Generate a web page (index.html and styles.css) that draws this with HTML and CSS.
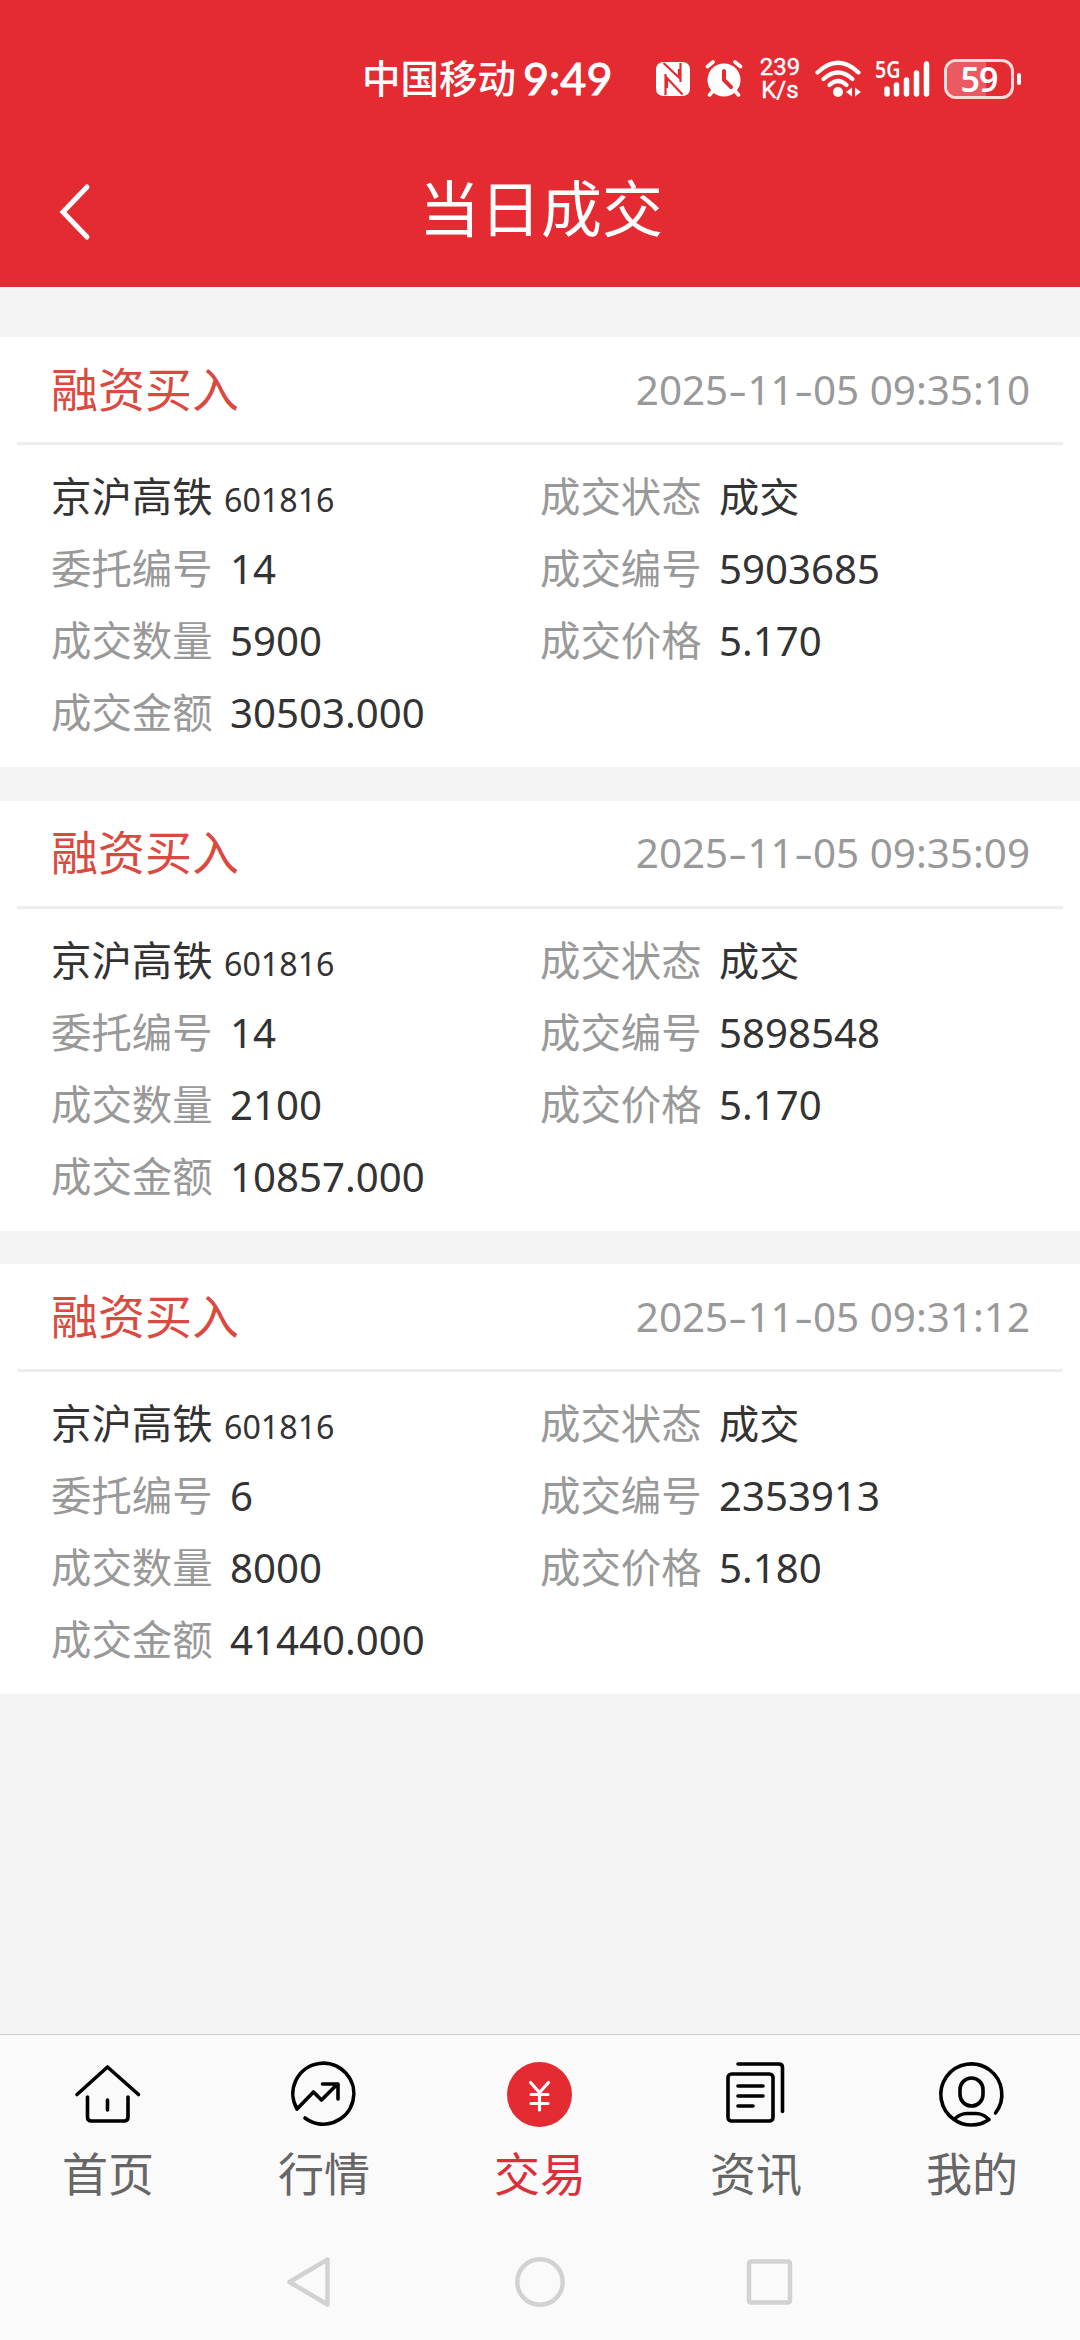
FILE: index.html
```html
<!DOCTYPE html>
<html lang="zh-CN">
<head>
<meta charset="utf-8">
<title>当日成交</title>
<link rel="stylesheet" href="styles.css">
</head>
<body>
<header class="header">
  <div class="status">
    <span class="carrier">中国移动</span>
    <span class="clock">9:49</span>
    <svg class="nfc" width="34" height="34" viewBox="0 0 34 34"><path d="M8 0H26Q34 0 34 8V26Q34 34 26 34H8Q0 34 0 26V8Q0 0 8 0Z" fill="#fff"/><path d="M7.500 1L23 15.500V7M24.500 1V20M11 26V16L26.500 32.500M9.500 12V33" fill="none" stroke="#e32b31" stroke-width="2.200"/></svg>
    <svg class="alarm" width="38" height="37" viewBox="0 0 38 37"><circle cx="19" cy="20" r="16.500" fill="#fff"/><path d="M2.500 6.500L8 2M35.500 6.500L30 2M8 31L4.500 35M30 31L33.500 35" stroke="#fff" stroke-width="3.600" stroke-linecap="round"/><path d="M19 11V20L26 27" fill="none" stroke="#e32b31" stroke-width="4" stroke-linecap="round"/></svg>
    <span class="speed"><span>239</span><span>K/s</span></span>
    <svg class="wifi" width="46" height="37" viewBox="0 0 46 37"><g fill="none" stroke="#fff" stroke-width="4.200" stroke-linecap="round"><path d="M2.500 12.500Q23-7 43.500 12.500"/><path d="M8.500 19Q23 6 37.500 19"/><path d="M14.500 25Q23 17 31.500 25"/></g><circle cx="23" cy="32" r="5" fill="#fff"/><path d="M31 32L37 27.500V36.500ZM46 32L40 27.500V36.500Z" fill="#fff"/></svg>
    <span class="signal"><svg width="48" height="38" viewBox="0 0 48 38"><g stroke="#fff" stroke-width="5.500" stroke-linecap="round"><path d="M4 29V34M13.500 25V34M23.500 20V34M33.500 13V34M43.500 4V34"/></g></svg><b class="net">5G</b></span>
    <span class="battery"><span class="level"></span><span class="pct">59</span></span><i class="nub"></i>
  </div>
  <div class="titlebar">
    <svg class="back" width="34" height="58" viewBox="0 0 34 58"><path d="M30 4L6 29L30 54" fill="none" stroke="#fff" stroke-width="5" stroke-linecap="round"/></svg>
    <h1 class="title">当日成交</h1>
  </div>
</header>
<main class="list">
  <section class="card">
    <div class="head"><span class="kind">融资买入</span><time class="time">2025<i class="dash">-</i>11<i class="dash">-</i>05 09:35:10</time></div>
    <div class="grid">
      <div class="cell"><span class="name">京沪高铁</span><span class="code">601816</span></div><div class="cell"><span class="label">成交状态</span><span class="value">成交</span></div>
      <div class="cell"><span class="label">委托编号</span><span class="value">14</span></div><div class="cell"><span class="label">成交编号</span><span class="value">5903685</span></div>
      <div class="cell"><span class="label">成交数量</span><span class="value">5900</span></div><div class="cell"><span class="label">成交价格</span><span class="value">5.170</span></div>
      <div class="cell"><span class="label">成交金额</span><span class="value">30503.000</span></div>
    </div>
  </section>
  <section class="card">
    <div class="head"><span class="kind">融资买入</span><time class="time">2025<i class="dash">-</i>11<i class="dash">-</i>05 09:35:09</time></div>
    <div class="grid">
      <div class="cell"><span class="name">京沪高铁</span><span class="code">601816</span></div><div class="cell"><span class="label">成交状态</span><span class="value">成交</span></div>
      <div class="cell"><span class="label">委托编号</span><span class="value">14</span></div><div class="cell"><span class="label">成交编号</span><span class="value">5898548</span></div>
      <div class="cell"><span class="label">成交数量</span><span class="value">2100</span></div><div class="cell"><span class="label">成交价格</span><span class="value">5.170</span></div>
      <div class="cell"><span class="label">成交金额</span><span class="value">10857.000</span></div>
    </div>
  </section>
  <section class="card">
    <div class="head"><span class="kind">融资买入</span><time class="time">2025<i class="dash">-</i>11<i class="dash">-</i>05 09:31:12</time></div>
    <div class="grid">
      <div class="cell"><span class="name">京沪高铁</span><span class="code">601816</span></div><div class="cell"><span class="label">成交状态</span><span class="value">成交</span></div>
      <div class="cell"><span class="label">委托编号</span><span class="value">6</span></div><div class="cell"><span class="label">成交编号</span><span class="value">2353913</span></div>
      <div class="cell"><span class="label">成交数量</span><span class="value">8000</span></div><div class="cell"><span class="label">成交价格</span><span class="value">5.180</span></div>
      <div class="cell"><span class="label">成交金额</span><span class="value">41440.000</span></div>
    </div>
  </section>
</main>
<nav class="tabs">
  <a class="tab"><svg class="icon" viewBox="0 0 72 72"><path d="M5 38.500L35.500 11L66.500 38.500M15.500 41V61Q15.500 65 19.500 65H52Q56 65 56 61V41M35.500 44V54"/></svg>首页</a>
  <a class="tab"><svg class="icon" viewBox="0 0 72 72"><path d="M9 53A30.500 30.500 0 1 1 17 62M9 53L25.500 36L33.500 44L49.500 28M34.500 28H50V43"/></svg>行情</a>
  <a class="tab active"><svg class="icon" viewBox="0 0 72 72"><circle class="disc" cx="35.500" cy="38.500" r="32.500"/><path class="yen" d="M26.500 26.500L35.500 36.500L44.500 26.500M27 38.500H44M27 47.500H44M35.500 36.500V54"/></svg>交易</a>
  <a class="tab"><svg class="icon" viewBox="0 0 72 72"><rect x="8" y="18" width="45" height="47" rx="3.500"/><path d="M18 8H59Q62.500 8 62.500 11.500V55.500M18 30H43M18 40H43M18 50H33"/></svg>资讯</a>
  <a class="tab"><svg class="icon" viewBox="0 0 72 72"><path d="M59.500 57A30.500 30.500 0 1 0 18 63.500A30.500 30.500 0 0 0 53 63.500Q47 57.500 40 57.500H31Q24 57.500 18 63.500"/><rect x="24" y="22" width="23" height="28" rx="11.500"/></svg>我的</a>
</nav>
<footer class="sysnav">
  <svg width="520" height="60" viewBox="0 0 520 60"><g fill="none" stroke="#d2d2d2" stroke-width="4.500" stroke-linejoin="round"><path d="M9.500 30L47.500 7.500V52.500Z"/><circle cx="260" cy="30" r="22.700"/><rect x="469" y="9.500" width="41" height="41" rx="2"/></g></svg>
</footer>
</body>
</html>
```
FILE: styles.css
```css
* { box-sizing: border-box; }
body {
  margin: 0;
  width: 1080px;
  height: 2340px;
  display: flex;
  flex-direction: column;
  background: #f4f4f4;
  color: #333;
  font-family: "Noto Sans", "Noto Sans CJK SC", sans-serif;
}
i { font-style: normal; }
svg { display: block; flex: none; }

.header { height: 287px; background: #e32b31; color: #fff; }
.status { height: 157px; padding: 0 58px 0 362px; display: flex; align-items: center; white-space: nowrap; }
.carrier { width: 155px; padding-bottom: 6px; font: 500 38.5px/50px "Noto Sans CJK SC", sans-serif; }
.clock { width: 90px; margin-left: 6px; padding-bottom: 2px; font: 400 45px/50px Lato, sans-serif; -webkit-text-stroke: 1px #fff; }
.nfc { margin-left: 43px; }
.alarm { margin-left: 15px; }
.speed { width: 42px; margin-left: 16px; display: flex; flex-direction: column; align-items: center; font: 400 24px/23px Roboto, sans-serif; -webkit-text-stroke: .4px #fff; }
.wifi { margin-left: 14px; }
.signal { position: relative; margin-left: 22px; }
.net { position: absolute; left: -8px; top: -3px; font: 600 24px/24px "Noto Sans", sans-serif; transform: scaleX(.82); transform-origin: left; }
.battery { position: relative; flex: none; width: 70px; height: 40px; margin-left: 13px; border: 3px solid #fbdcdd; border-radius: 12px; display: flex; align-items: center; justify-content: center; }
.level { position: absolute; left: 0; top: 0; bottom: 0; width: 61%; border-radius: 9px 0 0 9px; background: #eb5a60; }
.pct { position: relative; font: 600 34px/34px "Noto Sans", sans-serif; letter-spacing: -1px; }
.nub { flex: none; width: 4px; height: 12px; margin-left: 3px; border-radius: 2px; background: #fff; }
.titlebar { height: 110px; padding-left: 57px; display: flex; align-items: center; }
.title { margin: 0 0 0 328px; padding-bottom: 12px; font: 400 61px/80px "Noto Sans CJK SC", sans-serif; }

.list { flex: 1; padding-top: 50px; display: flex; flex-direction: column; gap: 33.5px; }
.card { height: 430px; background: #fff; }
.head { height: 108px; margin: 0 17px; padding: 0 33px 0 34px; border-bottom: 3px solid #ededed; display: flex; align-items: center; justify-content: space-between; }
.kind { padding-bottom: 2px; font-size: 47px; line-height: 60px; color: #db4a40; }
.time { font-size: 40.4px; line-height: 60px; color: #999; }
.dash { display: inline-block; width: 19.3px; text-align: center; transform: scaleX(1.45); }
.grid { padding: 16px 0 18px 51px; display: grid; grid-template-columns: 489px 1fr; grid-auto-rows: 72px; }
.cell { display: flex; align-items: baseline; font-size: 40.4px; line-height: 72px; white-space: nowrap; }
.label { width: 161px; color: #999; }
.value { margin-left: 18px; font-size: 40.2px; }
.name { width: 161px; }
.code { margin-left: 12px; font-size: 32.2px; }

.tabs { height: 198px; padding-top: 21px; display: flex; background: #fafafa; border-top: 1px solid #ccc; color: #666; }
.tab { flex: 1; display: flex; flex-direction: column; align-items: center; font-size: 46px; line-height: 60px; }
.icon { width: 72px; height: 72px; margin-bottom: 15px; fill: none; stroke: #000; stroke-width: 3.6; stroke-linecap: round; stroke-linejoin: round; }
.active { color: #d9303a; }
.icon .disc { fill: #e32b31; stroke: none; }
.icon .yen { stroke: #fff; stroke-width: 3.2; }
.sysnav { height: 108px; padding-top: 20px; background: #fafafa; display: flex; justify-content: center; }
```
